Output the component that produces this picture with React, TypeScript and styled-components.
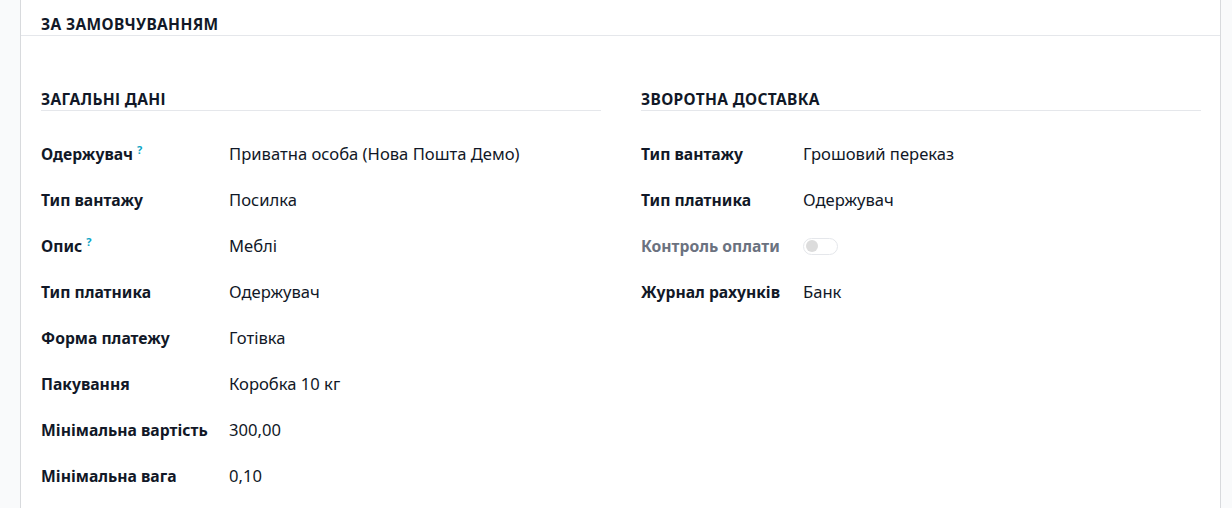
import React from "react";
import styled, { createGlobalStyle } from "styled-components";

const Global = createGlobalStyle`
  html, body { margin: 0; padding: 0; background: #f9fafb; }
  body { font-family: "Noto Sans", "Open Sans", sans-serif; color: #111827; }
`;

const Page = styled.div`
  height: 508px;
  overflow: hidden;
  padding-left: 20px;
  display: flex;
`;

const Sheet = styled.div`
  width: 1199px;
  background: #fff;
  border-left: 1px solid #d8dadd;
  border-right: 1px solid #d8dadd;
  min-height: 508px;
`;

const SectionTitle = styled.div`
  padding: 14px 20px 1px 20px;
  font-size: 15.5px;
  font-weight: 700;
  letter-spacing: 0.35px;
  text-transform: uppercase;
  line-height: 20px;
  border-bottom: 1px solid #e5e7eb;
`;

const Groups = styled.div`
  display: grid;
  grid-template-columns: 560px 560px;
  column-gap: 40px;
  padding: 53px 20px 0 20px;
`;

const Group = styled.div`
  display: flex;
  flex-direction: column;
`;

const GroupTitle = styled.div`
  font-size: 15.5px;
  font-weight: 700;
  letter-spacing: 0.35px;
  line-height: 20px;
  text-transform: uppercase;
  padding-bottom: 1px;
  border-bottom: 1px solid #e5e7eb;
  margin-bottom: 20px;
`;

const Rows = styled.div<{ $labelWidth: number }>`
  display: grid;
  grid-template-columns: ${(p) => p.$labelWidth}px 1fr;
  grid-auto-rows: 46px;
  align-items: center;
`;

const Label = styled.div<{ $muted?: boolean }>`
  font-size: 15.7px;
  font-weight: 700;
  color: ${(p) => (p.$muted ? "#6b7280" : "#111827")};
  line-height: 22px;
  white-space: nowrap;
`;

const Help = styled.sup`
  color: #0ea5c6;
  font-size: 11px;
  font-weight: 700;
  margin-left: 4px;
  vertical-align: 6px;
  line-height: 0;
`;

const Value = styled.div`
  font-size: 16.6px;
  line-height: 22px;
  color: #111827;
  white-space: nowrap;
`;

const Toggle = styled.div`
  width: 31px;
  height: 15px;
  border: 1px solid #e5e7eb;
  border-radius: 9px;
  display: flex;
  align-items: center;
  padding-left: 2px;
  box-sizing: content-box;
  &::before {
    content: "";
    width: 12px;
    height: 12px;
    border-radius: 50%;
    background: #dcdcdc;
  }
`;

type Row = { label: string; value?: string; help?: boolean; muted?: boolean; toggle?: boolean };

const left: Row[] = [
  { label: "Одержувач", value: "Приватна особа (Нова Пошта Демо)", help: true },
  { label: "Тип вантажу", value: "Посилка" },
  { label: "Опис", value: "Меблі", help: true },
  { label: "Тип платника", value: "Одержувач" },
  { label: "Форма платежу", value: "Готівка" },
  { label: "Пакування", value: "Коробка 10 кг" },
  { label: "Мінімальна вартість", value: "300,00" },
  { label: "Мінімальна вага", value: "0,10" },
];

const right: Row[] = [
  { label: "Тип вантажу", value: "Грошовий переказ" },
  { label: "Тип платника", value: "Одержувач" },
  { label: "Контроль оплати", muted: true, toggle: true },
  { label: "Журнал рахунків", value: "Банк" },
];

const renderRows = (rows: Row[]) =>
  rows.map((r, i) => (
    <React.Fragment key={i}>
      <Label $muted={r.muted}>
        {r.label}
        {r.help && <Help>?</Help>}
      </Label>
      {r.toggle ? <Toggle /> : <Value>{r.value}</Value>}
    </React.Fragment>
  ));

export default function App() {
  return (
    <>
      <Global />
      <Page>
        <Sheet>
          <SectionTitle>За замовчуванням</SectionTitle>
          <Groups>
            <Group>
              <GroupTitle>Загальні дані</GroupTitle>
              <Rows $labelWidth={188}>{renderRows(left)}</Rows>
            </Group>
            <Group>
              <GroupTitle>Зворотна доставка</GroupTitle>
              <Rows $labelWidth={162}>{renderRows(right)}</Rows>
            </Group>
          </Groups>
        </Sheet>
      </Page>
    </>
  );
}
